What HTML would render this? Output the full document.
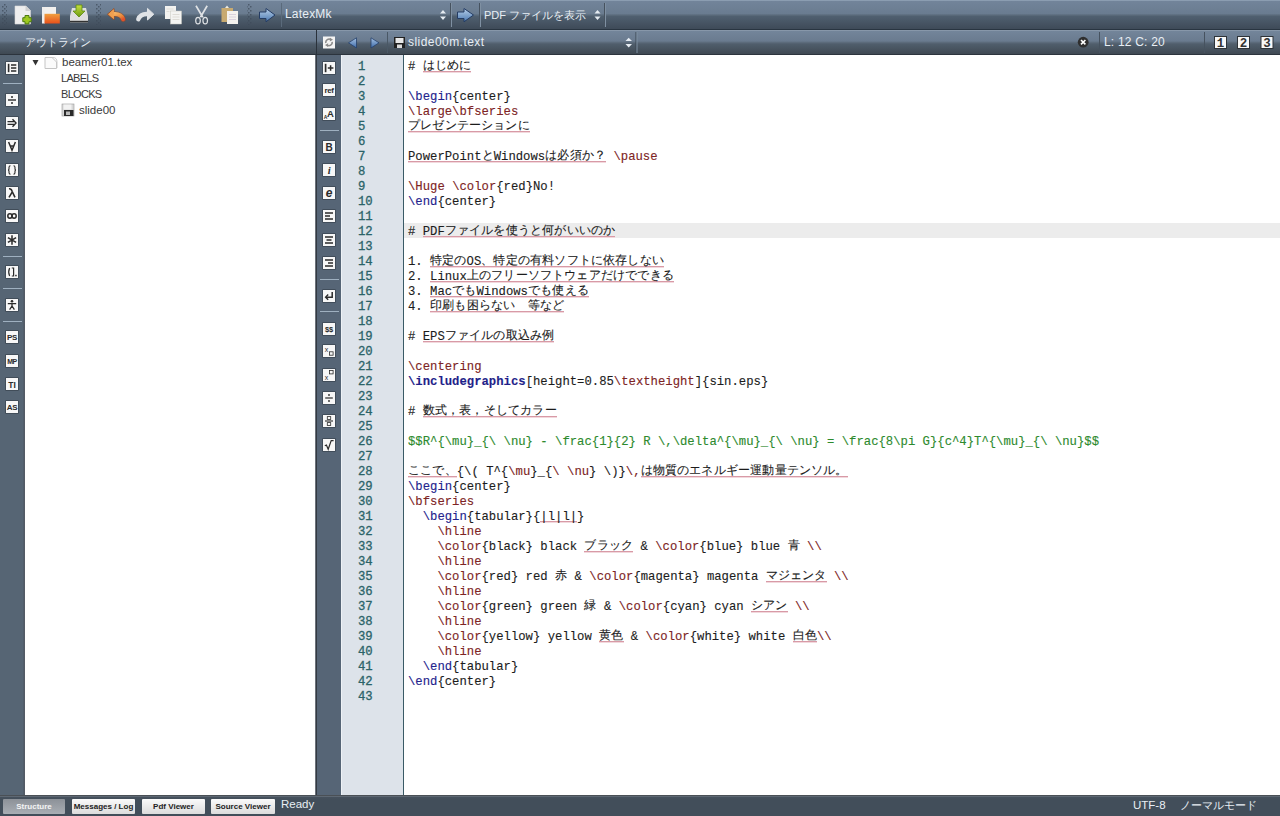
<!DOCTYPE html>
<html><head><meta charset="utf-8"><title>Texmaker</title>
<style>
*{box-sizing:border-box}
html,body{margin:0;padding:0}
body{width:1280px;height:816px;overflow:hidden;position:relative;background:#3e4a57;font-family:"Liberation Sans",sans-serif}
.a{position:absolute}
#tb{left:0;top:0;width:1280px;height:30px;background:linear-gradient(#8b9db1 0,#8b9db1 1px,#72849a 1px,#6a7c90 13.5px,#5c6c7d 15px,#4f5f6f 16.5px,#3f4b59 28.5px,#293541 29.5px)}
#hl{left:0;top:30px;width:316px;height:25px;background:linear-gradient(#8797a9 0,#8797a9 1px,#73859a 1px,#6a7b8f 11px,#5c6b7b 12.5px,#505e6c 14px,#3f4953 24px,#2c343d 24px)}
#hr{left:316px;top:30px;width:964px;height:25px;background:linear-gradient(#8797a9 0,#8797a9 1px,#73859a 1px,#6a7b8f 11px,#5c6b7b 12.5px,#505e6c 14px,#3f4953 24px,#2c343d 24px)}
#lbar{left:0;top:55px;width:25px;height:740px;background:linear-gradient(90deg,#566574 0,#566574 23px,#4d5662 24px,#5a5f68 25px)}
#tree{left:25px;top:55px;width:290px;height:740px;background:#fff}
#split{left:315px;top:55px;width:2px;height:740px;background:linear-gradient(90deg,#6b717a 0,#6b717a 0.5px,#333a42 1px)}
#ebar{left:317px;top:55px;width:24px;height:740px;background:#566576}
#gut{left:341px;top:55px;width:62px;height:740px;background:linear-gradient(90deg,#eef2f6 0,#eef2f6 1px,#dde3ea 1px)}
#gline{left:403px;top:55px;width:1px;height:740px;background:#3a5a66}
#ed{left:404px;top:55px;width:876px;height:740px;background:#fff}
#cur{left:404px;top:223px;width:876px;height:15px;background:#ececec}
#sb{left:0;top:795px;width:1280px;height:21px;background:linear-gradient(#4a5056 0,#4a5056 1px,#5e6873 1px,#5e6873 2px,#46515d 2px,#424e5a 5px,#424e5a 21px)}
.cl{position:absolute;left:408px;height:15px;line-height:15px;white-space:pre;font-family:"Liberation Mono",monospace;font-size:12.25px;color:#1c1c1c;-webkit-text-stroke:0.12px currentColor}
.nl{position:absolute;left:358px;height:15px;line-height:15px;white-space:pre;font-family:"Liberation Mono",monospace;font-size:12.25px;color:#2b6368;-webkit-text-stroke:0.3px currentColor}
.k{color:#23238c}
.kb{color:#1f1f8a;font-weight:bold}
.m{color:#7d2424}
.g{color:#2d8a2d}
.u{background:linear-gradient(#d89aa6,#d89aa6) 0 11px/100% 1px no-repeat,linear-gradient(#f2d8dd,#f2d8dd) 0 12px/100% 1px no-repeat}
.j{position:relative;top:-1px;letter-spacing:0.18px}
.ico{position:absolute;width:12px;height:12px;background:#f4f4f4;color:#222;font-size:10px;line-height:12px;text-align:center;font-weight:bold;overflow:hidden}
.sep{position:absolute;height:2px;background:#a9b8c6}
.btn{position:absolute;top:799px;height:15px;border-radius:1px;font-size:8px;font-weight:bold;line-height:15px;text-align:center;background:linear-gradient(#fafafa,#dcdcdc);color:#222}
.tt{position:absolute;font-size:11px;color:#3a3a3a;white-space:pre}
.wt{position:absolute;color:#e8eef4;white-space:pre;font-size:12px}

</style></head>
<body>
<div id="tb" class="a"></div>
<div id="hl" class="a"></div>
<div id="hr" class="a"></div>
<div id="lbar" class="a"></div>
<div id="tree" class="a"></div>
<div id="split" class="a"></div>
<div id="ebar" class="a"></div>
<div id="gut" class="a"></div>
<div id="gline" class="a"></div>
<div id="ed" class="a"></div>
<div id="cur" class="a"></div>
<div id="sb" class="a"></div>

<!-- toolbar icons -->
<svg class="a" style="left:0;top:0" width="620" height="30" viewBox="0 0 620 30">
  <defs>
    <linearGradient id="orng" x1="0" y1="0" x2="0" y2="1"><stop offset="0" stop-color="#f0a040"/><stop offset="1" stop-color="#e8501a"/></linearGradient>
    <linearGradient id="grn" x1="0" y1="0" x2="0" y2="1"><stop offset="0" stop-color="#c8e040"/><stop offset="1" stop-color="#6a9a10"/></linearGradient>
    <linearGradient id="blu" x1="0" y1="0" x2="0" y2="1"><stop offset="0" stop-color="#b8d0ea"/><stop offset="1" stop-color="#4a78b0"/></linearGradient>
    <pattern id="dots" width="4" height="4" patternUnits="userSpaceOnUse"><rect x="0" y="0" width="1.5" height="1.5" fill="#3e4a58" opacity="0.7"/><rect x="2" y="2" width="1.5" height="1.5" fill="#3e4a58" opacity="0.7"/></pattern>
  </defs>
  <!-- grips -->
  <rect x="2" y="4" width="5" height="21" fill="url(#dots)"/>
  <rect x="96" y="4" width="5" height="21" fill="url(#dots)"/>
  <rect x="247" y="4" width="5" height="21" fill="url(#dots)"/>
  <!-- new -->
  <path d="M15 6 H26 L30.5 10.5 V24 H15 Z" fill="#eeeeee" stroke="#d8d8d8" stroke-width="0.6"/>
  <path d="M25.5 6 V11 H30.5" fill="#cfcfcf"/>
  <path d="M25 15.5 h4 v2.2 h2.2 v4 h-2.2 v2.2 h-4 v-2.2 h-2.2 v-4 h2.2 z" fill="#9cc820" stroke="#4d7a10" stroke-width="1"/>
  <!-- open -->
  <path d="M42 7 H56 V15 H42 Z" fill="#f2f0ee"/>
  <path d="M42 7 H45 V23.5 H42 Z" fill="#f0eeec"/>
  <path d="M44.5 13.8 H59.8 V23.5 H44.5 Z" fill="url(#orng)"/>
  <!-- save -->
  <path d="M72 8 H86 L88 16 V22.5 H70 V16 Z" fill="#dedede"/>
  <rect x="70" y="20.8" width="18" height="1.6" fill="#333"/>
  <path d="M76 5 H82 V11 H85 L79 17 L73 11 H76 Z" fill="url(#grn)" stroke="#5a8a10" stroke-width="0.8"/>
  <!-- undo -->
  <linearGradient id="ung" x1="0" y1="0" x2="1" y2="1"><stop offset="0" stop-color="#f6b666"/><stop offset="0.6" stop-color="#ea8a3a"/><stop offset="1" stop-color="#e0502a"/></linearGradient>
  <path d="M112.5 14.2 Q121 13.2 123.2 19.3" fill="none" stroke="#9a4a20" stroke-width="5.4" stroke-linecap="round" opacity="0.55"/>
  <path d="M107.5 14.2 L114 8.6 L114 19.8 Z" fill="#ea8a3a" stroke="#9a4a20" stroke-width="1" stroke-linejoin="round" opacity="0.9"/>
  <path d="M112.5 14.2 Q121 13.2 123.2 19.3" fill="none" stroke="url(#ung)" stroke-width="4" stroke-linecap="round"/>
  <path d="M108.6 14.2 L113.6 9.8 L113.6 18.6 Z" fill="#f0a050" stroke="#f0a050" stroke-width="0.8" stroke-linejoin="round"/>
  <!-- redo -->
  <path d="M149 14.2 Q140.5 13.2 138.3 19.3" fill="none" stroke="#dfe2e6" stroke-width="4.4" stroke-linecap="round"/>
  <path d="M153.8 14.2 L147.5 8.4 L147.5 20 Z" fill="#dfe2e6" stroke="#dfe2e6" stroke-width="1" stroke-linejoin="round"/>
  <!-- copy -->
  <rect x="165" y="6" width="11" height="13" fill="#f2f2f0"/>
  <rect x="170.5" y="11" width="11" height="13" fill="#f4f4f2" stroke="#c8c8c0" stroke-width="0.5"/>
  <path d="M172.5 14.5h7M172.5 17h7M172.5 19.5h7" stroke="#c9c5bb" stroke-width="0.5"/><path d="M166.5 9h7M166.5 11.5h3" stroke="#cfcbc2" stroke-width="0.5"/>
  <!-- cut -->
  <path d="M196 5.8 L202.8 17.2 M207.2 5.8 L200.4 17.2" stroke="#dfe2e5" stroke-width="1.7"/>
  <ellipse cx="198" cy="20.6" rx="2.3" ry="3.3" fill="none" stroke="#dfe2e5" stroke-width="1.2"/>
  <ellipse cx="205.2" cy="20.6" rx="2.3" ry="3.3" fill="none" stroke="#dfe2e5" stroke-width="1.2"/>
  <!-- paste -->
  <rect x="221.5" y="8" width="11.5" height="14" fill="#c8aa70"/>
  <path d="M225 8 L227 5.5 L229 8 Z" fill="#f0ece0"/>
  <rect x="227" y="11" width="11" height="13" fill="#f4f2ee"/>
  <path d="M229 14.5h7M229 17h7M229 19.5h7" stroke="#c0b0cc" stroke-width="0.5"/>
  <!-- blue arrows -->
  <path d="M259.5 12 H266 V8.5 L275 15 L266 21.8 V18.5 H259.5 Z" fill="url(#blu)" stroke="#243c64" stroke-width="1"/>
  <path d="M457.5 12 H464 V8.5 L473.5 15 L464 21.8 V18.5 H457.5 Z" fill="url(#blu)" stroke="#243c64" stroke-width="1"/>
  <!-- separators -->
  <rect x="281" y="3" width="1" height="24" fill="#5a6a7b"/>
  <rect x="450" y="3" width="1" height="24" fill="#46525f"/>
  <rect x="451" y="3" width="1" height="24" fill="#7f90a2"/>
  <rect x="479" y="3" width="1" height="24" fill="#46525f"/>
  <rect x="480" y="3" width="1" height="24" fill="#7f90a2"/>
  <rect x="604" y="3" width="1" height="24" fill="#46525f"/>
  <rect x="605" y="3" width="1" height="24" fill="#7f90a2"/>
  <!-- combobox arrows -->
  <path d="M440 13.5 L443 10 L446 13.5 Z M440 16.5 L443 20 L446 16.5 Z" fill="#e6ecf2"/>
  <path d="M594.5 13.5 L597.5 10 L600.5 13.5 Z M594.5 16.5 L597.5 20 L600.5 16.5 Z" fill="#e6ecf2"/>
</svg>

<!-- header right icons -->
<svg class="a" style="left:0;top:30px" width="1280" height="25" viewBox="0 30 1280 25">
  <defs>
    <linearGradient id="blu2" x1="0" y1="0" x2="0" y2="1"><stop offset="0" stop-color="#a8c4e4"/><stop offset="1" stop-color="#3d6aa8"/></linearGradient>
  </defs>
  <rect x="316" y="30" width="1" height="25" fill="#2a323b"/>
  <rect x="323" y="36.5" width="12" height="12" fill="#f4f4f4"/>
  <path d="M325.8 43 A3.4 3.4 0 0 1 331 39.6 M332.2 41.8 A3.4 3.4 0 0 1 327 45.2" fill="none" stroke="#8a8a8a" stroke-width="1.6"/><path d="M330 37.8 L333 39.8 L329.8 41.6 Z M328 47 L325 45 L328.2 43.2 Z" fill="#8a8a8a"/>
  <path d="M348.5 42.8 L356.5 37.8 V48 Z" fill="url(#blu2)" stroke="#26406a" stroke-width="0.8"/>
  <path d="M379 42.8 L371 37.8 V48 Z" fill="url(#blu2)" stroke="#26406a" stroke-width="0.8"/>
  <rect x="387" y="32" width="1" height="21" fill="#4a5866"/>
  <rect x="394" y="37" width="11" height="11" fill="#222"/>
  <rect x="395.5" y="38" width="8" height="5" fill="#e8e8e8"/>
  <rect x="397" y="44.5" width="5" height="3.5" fill="#ddd"/>
  <path d="M625.5 41 L628.7 37.8 L632 41 Z M625.5 44 L628.7 47.5 L632 44 Z" fill="#e6ecf2"/>
  <rect x="635.5" y="32" width="1" height="21" fill="#3a4652"/>
  <rect x="636.5" y="32" width="1" height="21" fill="#7f90a2"/>
  <circle cx="1083.2" cy="42.2" r="5.4" fill="#2f2f2f"/>
  <path d="M1081 40 L1085.4 44.4 M1085.4 40 L1081 44.4" stroke="#fff" stroke-width="1.6"/>
  <rect x="1099" y="32" width="1" height="21" fill="#46525f"/>
  <rect x="1204" y="32" width="1" height="21" fill="#46525f"/>
  <rect x="1214" y="36" width="13" height="13" fill="#2e3338"/>
  <rect x="1215" y="37" width="11" height="11" fill="#f8f8f8"/>
  <rect x="1237" y="36" width="13" height="13" fill="#2e3338"/>
  <rect x="1238" y="37" width="11" height="11" fill="#f8f8f8"/>
  <rect x="1260.5" y="36" width="13" height="13" fill="#2e3338"/>
  <rect x="1261.5" y="37" width="11" height="11" fill="#f8f8f8"/>
  <text x="1220.5" y="47" font-family="Liberation Mono" font-weight="bold" font-size="12.5" text-anchor="middle" fill="#333">1</text>
  <text x="1243.5" y="47" font-family="Liberation Mono" font-weight="bold" font-size="12.5" text-anchor="middle" fill="#333">2</text>
  <text x="1267" y="47" font-family="Liberation Mono" font-weight="bold" font-size="12.5" text-anchor="middle" fill="#333">3</text>
</svg>

<!-- header texts -->
<div class="wt" style="left:25px;top:34.5px;font-size:11px">アウトライン</div>
<div class="wt" style="left:285px;top:7px;letter-spacing:0.2px">LatexMk</div>
<div class="wt" style="left:484px;top:8px;font-size:11px">PDF ファイルを表示</div>
<div class="wt" style="left:408px;top:35px;letter-spacing:0.45px">slide00m.text</div>
<div class="wt" style="left:1104px;top:35px;letter-spacing:0.2px">L: 12 C: 20</div>

<!-- icons -->
<svg class="a" style="left:5px;top:61px" width="14" height="14" viewBox="-1 -1 14 14"><rect x="-0.6" y="-0.6" width="13.2" height="13.2" fill="#2a323a" opacity="0.75"/><rect x="0" y="0" width="12" height="12" fill="#f7f7f7"/><path d="M1.8 1.8h1.6v8.4h-1.6z" fill="#2b2b2b"/><path d="M5 3H10.3M5 6H10.3M5 9H10.3" fill="none" stroke="#2b2b2b" stroke-width="1.3"/></svg>
<svg class="a" style="left:5px;top:93px" width="14" height="14" viewBox="-1 -1 14 14"><rect x="-0.6" y="-0.6" width="13.2" height="13.2" fill="#2a323a" opacity="0.75"/><rect x="0" y="0" width="12" height="12" fill="#f7f7f7"/><circle cx="6" cy="3" r="1" fill="#2b2b2b"/><circle cx="6" cy="9" r="1" fill="#2b2b2b"/><path d="M2 6H10" fill="none" stroke="#2b2b2b" stroke-width="1.4"/></svg>
<svg class="a" style="left:5px;top:116px" width="14" height="14" viewBox="-1 -1 14 14"><rect x="-0.6" y="-0.6" width="13.2" height="13.2" fill="#2a323a" opacity="0.75"/><rect x="0" y="0" width="12" height="12" fill="#f7f7f7"/><path d="M1.5 4.6H8M1.5 7.4H8" fill="none" stroke="#2b2b2b" stroke-width="1.2"/><path d="M6.5 2.3L10 6L6.5 9.7" fill="none" stroke="#2b2b2b" stroke-width="1.4"/></svg>
<svg class="a" style="left:5px;top:139px" width="14" height="14" viewBox="-1 -1 14 14"><rect x="-0.6" y="-0.6" width="13.2" height="13.2" fill="#2a323a" opacity="0.75"/><rect x="0" y="0" width="12" height="12" fill="#f7f7f7"/><path d="M2.6 2L6 10.2L9.4 2M4.2 6H7.8" fill="none" stroke="#2b2b2b" stroke-width="1.5"/></svg>
<svg class="a" style="left:5px;top:163px" width="14" height="14" viewBox="-1 -1 14 14"><rect x="-0.6" y="-0.6" width="13.2" height="13.2" fill="#2a323a" opacity="0.75"/><rect x="0" y="0" width="12" height="12" fill="#f7f7f7"/><path d="M4.5 1.8Q3 1.8 3 3.5V5Q3 6 2 6Q3 6 3 7V8.5Q3 10.2 4.5 10.2M7.5 1.8Q9 1.8 9 3.5V5Q9 6 10 6Q9 6 9 7V8.5Q9 10.2 7.5 10.2" fill="none" stroke="#2b2b2b" stroke-width="1.1"/></svg>
<svg class="a" style="left:5px;top:186px" width="14" height="14" viewBox="-1 -1 14 14"><rect x="-0.6" y="-0.6" width="13.2" height="13.2" fill="#2a323a" opacity="0.75"/><rect x="0" y="0" width="12" height="12" fill="#f7f7f7"/><path d="M3 1.8Q5.2 1.5 6.2 4.5L9 10.3M6.3 4.8L3 10.3" fill="none" stroke="#2b2b2b" stroke-width="1.6"/></svg>
<svg class="a" style="left:5px;top:209px" width="14" height="14" viewBox="-1 -1 14 14"><rect x="-0.6" y="-0.6" width="13.2" height="13.2" fill="#2a323a" opacity="0.75"/><rect x="0" y="0" width="12" height="12" fill="#f7f7f7"/><ellipse cx="3.9" cy="6" rx="2.1" ry="2.2" fill="none" stroke="#2b2b2b" stroke-width="1.5"/><ellipse cx="8.1" cy="6" rx="2.1" ry="2.2" fill="none" stroke="#2b2b2b" stroke-width="1.5"/></svg>
<svg class="a" style="left:5px;top:233px" width="14" height="14" viewBox="-1 -1 14 14"><rect x="-0.6" y="-0.6" width="13.2" height="13.2" fill="#2a323a" opacity="0.75"/><rect x="0" y="0" width="12" height="12" fill="#f7f7f7"/><path d="M6 1.3V10.7M1.9 3.6L10.1 8.4M10.1 3.6L1.9 8.4" fill="none" stroke="#2b2b2b" stroke-width="1.5"/></svg>
<svg class="a" style="left:5px;top:265px" width="14" height="14" viewBox="-1 -1 14 14"><rect x="-0.6" y="-0.6" width="13.2" height="13.2" fill="#2a323a" opacity="0.75"/><rect x="0" y="0" width="12" height="12" fill="#f7f7f7"/><path d="M3.6 2Q1.8 6 3.6 10M5.8 2H7.6V10H5.8" fill="none" stroke="#2b2b2b" stroke-width="1.2"/><rect x="9.2" y="8.8" width="1.5" height="1.5" fill="#2b2b2b"/></svg>
<svg class="a" style="left:5px;top:298px" width="14" height="14" viewBox="-1 -1 14 14"><rect x="-0.6" y="-0.6" width="13.2" height="13.2" fill="#2a323a" opacity="0.75"/><rect x="0" y="0" width="12" height="12" fill="#f7f7f7"/><circle cx="6" cy="2.3" r="1.3" fill="#2b2b2b"/><path d="M1.8 4.6H10.2M6 4.3V7.2M6 7L3.6 10.6M6 7L8.4 10.6" fill="none" stroke="#2b2b2b" stroke-width="1.3"/></svg>
<svg class="a" style="left:5px;top:330px" width="14" height="14" viewBox="-1 -1 14 14"><rect x="-0.6" y="-0.6" width="13.2" height="13.2" fill="#2a323a" opacity="0.75"/><rect x="0" y="0" width="12" height="12" fill="#f7f7f7"/><text x="6" y="9.3" font-family="Liberation Sans" font-size="8" font-weight="bold" font-style="normal" text-anchor="middle" letter-spacing="-0.3" fill="#2b2b2b">PS</text></svg>
<svg class="a" style="left:5px;top:354px" width="14" height="14" viewBox="-1 -1 14 14"><rect x="-0.6" y="-0.6" width="13.2" height="13.2" fill="#2a323a" opacity="0.75"/><rect x="0" y="0" width="12" height="12" fill="#f7f7f7"/><text x="6" y="9" font-family="Liberation Sans" font-size="7" font-weight="bold" font-style="normal" text-anchor="middle" letter-spacing="-0.5" fill="#2b2b2b">MP</text></svg>
<svg class="a" style="left:5px;top:377px" width="14" height="14" viewBox="-1 -1 14 14"><rect x="-0.6" y="-0.6" width="13.2" height="13.2" fill="#2a323a" opacity="0.75"/><rect x="0" y="0" width="12" height="12" fill="#f7f7f7"/><text x="6" y="9.5" font-family="Liberation Sans" font-size="8.5" font-weight="bold" font-style="normal" text-anchor="middle" letter-spacing="0" fill="#2b2b2b">TI</text></svg>
<svg class="a" style="left:5px;top:400px" width="14" height="14" viewBox="-1 -1 14 14"><rect x="-0.6" y="-0.6" width="13.2" height="13.2" fill="#2a323a" opacity="0.75"/><rect x="0" y="0" width="12" height="12" fill="#f7f7f7"/><text x="6" y="9.3" font-family="Liberation Sans" font-size="8" font-weight="bold" font-style="normal" text-anchor="middle" letter-spacing="-0.4" fill="#2b2b2b">AS</text></svg>
<div class="a" style="left:3px;top:83px;width:19px;height:1px;background:#9fb0c0"></div>
<div class="a" style="left:3px;top:256px;width:19px;height:1px;background:#9fb0c0"></div>
<div class="a" style="left:3px;top:288px;width:19px;height:1px;background:#9fb0c0"></div>
<div class="a" style="left:3px;top:321px;width:19px;height:1px;background:#9fb0c0"></div>
<svg class="a" style="left:322px;top:61px" width="14" height="14" viewBox="-1 -1 14 14"><rect x="-0.6" y="-0.6" width="13.2" height="13.2" fill="#2a323a" opacity="0.75"/><rect x="0" y="0" width="12" height="12" fill="#f7f7f7"/><path d="M2.6 1.8V10.2" fill="none" stroke="#2b2b2b" stroke-width="1.7"/><path d="M4.8 6H10.4M7.6 3.2V8.8" fill="none" stroke="#2b2b2b" stroke-width="1.5"/></svg>
<svg class="a" style="left:322px;top:83px" width="14" height="14" viewBox="-1 -1 14 14"><rect x="-0.6" y="-0.6" width="13.2" height="13.2" fill="#2a323a" opacity="0.75"/><rect x="0" y="0" width="12" height="12" fill="#f7f7f7"/><text x="6" y="9" font-family="Liberation Sans" font-size="8" font-weight="bold" font-style="normal" text-anchor="middle" letter-spacing="-0.4" fill="#2b2b2b">ref</text></svg>
<svg class="a" style="left:322px;top:107px" width="14" height="14" viewBox="-1 -1 14 14"><rect x="-0.6" y="-0.6" width="13.2" height="13.2" fill="#2a323a" opacity="0.75"/><rect x="0" y="0" width="12" height="12" fill="#f7f7f7"/><text x="2.6" y="11" font-family="Liberation Sans" font-size="5" font-weight="bold" font-style="normal" text-anchor="middle" letter-spacing="0" fill="#2b2b2b">A</text><text x="7.4" y="9" font-family="Liberation Sans" font-size="9.5" font-weight="bold" font-style="normal" text-anchor="middle" letter-spacing="0" fill="#2b2b2b">A</text></svg>
<svg class="a" style="left:322px;top:140px" width="14" height="14" viewBox="-1 -1 14 14"><rect x="-0.6" y="-0.6" width="13.2" height="13.2" fill="#2a323a" opacity="0.75"/><rect x="0" y="0" width="12" height="12" fill="#f7f7f7"/><text x="6" y="10" font-family="Liberation Sans" font-size="10" font-weight="bold" font-style="normal" text-anchor="middle" letter-spacing="0" fill="#2b2b2b">B</text></svg>
<svg class="a" style="left:322px;top:163px" width="14" height="14" viewBox="-1 -1 14 14"><rect x="-0.6" y="-0.6" width="13.2" height="13.2" fill="#2a323a" opacity="0.75"/><rect x="0" y="0" width="12" height="12" fill="#f7f7f7"/><text x="6.3" y="10" font-family="Liberation Serif" font-size="10.5" font-weight="bold" font-style="italic" text-anchor="middle" letter-spacing="0" fill="#2b2b2b">i</text></svg>
<svg class="a" style="left:322px;top:186px" width="14" height="14" viewBox="-1 -1 14 14"><rect x="-0.6" y="-0.6" width="13.2" height="13.2" fill="#2a323a" opacity="0.75"/><rect x="0" y="0" width="12" height="12" fill="#f7f7f7"/><text x="6" y="10" font-family="Liberation Sans" font-size="12" font-weight="bold" font-style="italic" text-anchor="middle" letter-spacing="0" fill="#2b2b2b">e</text></svg>
<svg class="a" style="left:322px;top:209px" width="14" height="14" viewBox="-1 -1 14 14"><rect x="-0.6" y="-0.6" width="13.2" height="13.2" fill="#2a323a" opacity="0.75"/><rect x="0" y="0" width="12" height="12" fill="#f7f7f7"/><path d="M2 3H10M2 6H7M2 9H10" fill="none" stroke="#2b2b2b" stroke-width="1.3"/></svg>
<svg class="a" style="left:322px;top:233px" width="14" height="14" viewBox="-1 -1 14 14"><rect x="-0.6" y="-0.6" width="13.2" height="13.2" fill="#2a323a" opacity="0.75"/><rect x="0" y="0" width="12" height="12" fill="#f7f7f7"/><path d="M2 3H10M3.5 6H8.5M2 9H10" fill="none" stroke="#2b2b2b" stroke-width="1.3"/></svg>
<svg class="a" style="left:322px;top:256px" width="14" height="14" viewBox="-1 -1 14 14"><rect x="-0.6" y="-0.6" width="13.2" height="13.2" fill="#2a323a" opacity="0.75"/><rect x="0" y="0" width="12" height="12" fill="#f7f7f7"/><path d="M2 3H10M5 6H10M2 9H10" fill="none" stroke="#2b2b2b" stroke-width="1.3"/></svg>
<svg class="a" style="left:322px;top:289px" width="14" height="14" viewBox="-1 -1 14 14"><rect x="-0.6" y="-0.6" width="13.2" height="13.2" fill="#2a323a" opacity="0.75"/><rect x="0" y="0" width="12" height="12" fill="#f7f7f7"/><path d="M9.2 2V7.2H3" fill="none" stroke="#2b2b2b" stroke-width="1.5"/><path d="M5.2 4.6L2.6 7.2L5.2 9.8" fill="none" stroke="#2b2b2b" stroke-width="1.4"/></svg>
<svg class="a" style="left:322px;top:322px" width="14" height="14" viewBox="-1 -1 14 14"><rect x="-0.6" y="-0.6" width="13.2" height="13.2" fill="#2a323a" opacity="0.75"/><rect x="0" y="0" width="12" height="12" fill="#f7f7f7"/><text x="6" y="9.2" font-family="Liberation Sans" font-size="7.5" font-weight="bold" font-style="normal" text-anchor="middle" letter-spacing="-0.1" fill="#2b2b2b">$$</text></svg>
<svg class="a" style="left:322px;top:344px" width="14" height="14" viewBox="-1 -1 14 14"><rect x="-0.6" y="-0.6" width="13.2" height="13.2" fill="#2a323a" opacity="0.75"/><rect x="0" y="0" width="12" height="12" fill="#f7f7f7"/><text x="3.5" y="6.5" font-family="Liberation Sans" font-size="7" font-weight="normal" font-style="normal" text-anchor="middle" letter-spacing="0" fill="#2b2b2b">x</text><rect x="6.5" y="6.8" width="3.6" height="3.4" fill="none" stroke="#2b2b2b" stroke-width="0.8"/></svg>
<svg class="a" style="left:322px;top:368px" width="14" height="14" viewBox="-1 -1 14 14"><rect x="-0.6" y="-0.6" width="13.2" height="13.2" fill="#2a323a" opacity="0.75"/><rect x="0" y="0" width="12" height="12" fill="#f7f7f7"/><rect x="6.5" y="1.5" width="3.6" height="3.4" fill="none" stroke="#2b2b2b" stroke-width="0.8"/><text x="3.5" y="10.5" font-family="Liberation Sans" font-size="7" font-weight="normal" font-style="normal" text-anchor="middle" letter-spacing="0" fill="#2b2b2b">x</text></svg>
<svg class="a" style="left:322px;top:391px" width="14" height="14" viewBox="-1 -1 14 14"><rect x="-0.6" y="-0.6" width="13.2" height="13.2" fill="#2a323a" opacity="0.75"/><rect x="0" y="0" width="12" height="12" fill="#f7f7f7"/><circle cx="6" cy="3" r="0.9" fill="#2b2b2b"/><circle cx="6" cy="9" r="0.9" fill="#2b2b2b"/><path d="M2.2 6H9.8" fill="none" stroke="#2b2b2b" stroke-width="1.2"/></svg>
<svg class="a" style="left:322px;top:414px" width="14" height="14" viewBox="-1 -1 14 14"><rect x="-0.6" y="-0.6" width="13.2" height="13.2" fill="#2a323a" opacity="0.75"/><rect x="0" y="0" width="12" height="12" fill="#f7f7f7"/><rect x="4.3" y="1.6" width="3.4" height="2.8" fill="none" stroke="#2b2b2b" stroke-width="0.8"/><rect x="4.3" y="7.6" width="3.4" height="2.8" fill="none" stroke="#2b2b2b" stroke-width="0.8"/><path d="M2 6H10" fill="none" stroke="#2b2b2b" stroke-width="1.1"/></svg>
<svg class="a" style="left:322px;top:438px" width="14" height="14" viewBox="-1 -1 14 14"><rect x="-0.6" y="-0.6" width="13.2" height="13.2" fill="#2a323a" opacity="0.75"/><rect x="0" y="0" width="12" height="12" fill="#f7f7f7"/><path d="M1.8 6.8L3.4 6L5.2 10.3L8.2 1.6H10.6" fill="none" stroke="#2b2b2b" stroke-width="1.2"/></svg>
<div class="a" style="left:320px;top:130px;width:19px;height:1px;background:#9fb0c0"></div>
<div class="a" style="left:320px;top:279px;width:19px;height:1px;background:#9fb0c0"></div>
<div class="a" style="left:320px;top:311px;width:19px;height:1px;background:#9fb0c0"></div>

<!-- tree -->
<svg class="a" style="left:25px;top:55px" width="60" height="65" viewBox="25 55 60 65">
  <path d="M32.5 60 L38.5 60 L35.5 65.5 Z" fill="#333"/>
  <path d="M45 57.5 H52 L56.5 62 V68.5 H45 Z" fill="#fafafa" stroke="#c4c4c4" stroke-width="1"/><path d="M47.5 57.5 H53 Q57 57.5 57 62 V68" fill="none" stroke="#c8c8c8" stroke-width="0.9"/>
  <rect x="62" y="104" width="12" height="12" fill="#d8d8d8" stroke="#999" stroke-width="0.6"/>
  <rect x="64" y="110" width="9.5" height="6" fill="#2a2a2a"/>
  <rect x="66" y="111.5" width="4" height="3.5" fill="#bbb"/>
  <rect x="63.5" y="104.5" width="8" height="5" fill="#f2f2f2"/>
</svg>
<div class="tt" style="left:62px;top:56px;font-size:11.5px">beamer01.tex</div>
<div class="tt" style="left:61px;top:72px;letter-spacing:-0.7px">LABELS</div>
<div class="tt" style="left:61px;top:88px;letter-spacing:-0.7px">BLOCKS</div>
<div class="tt" style="left:79px;top:104px;font-size:11.5px">slide00</div>

<div class="nl" style="top:60px">1</div>
<div class="nl" style="top:75px">2</div>
<div class="nl" style="top:90px">3</div>
<div class="nl" style="top:105px">4</div>
<div class="nl" style="top:120px">5</div>
<div class="nl" style="top:135px">6</div>
<div class="nl" style="top:150px">7</div>
<div class="nl" style="top:165px">8</div>
<div class="nl" style="top:180px">9</div>
<div class="nl" style="top:195px">10</div>
<div class="nl" style="top:210px">11</div>
<div class="nl" style="top:225px">12</div>
<div class="nl" style="top:240px">13</div>
<div class="nl" style="top:255px">14</div>
<div class="nl" style="top:270px">15</div>
<div class="nl" style="top:285px">16</div>
<div class="nl" style="top:300px">17</div>
<div class="nl" style="top:315px">18</div>
<div class="nl" style="top:330px">19</div>
<div class="nl" style="top:345px">20</div>
<div class="nl" style="top:360px">21</div>
<div class="nl" style="top:375px">22</div>
<div class="nl" style="top:390px">23</div>
<div class="nl" style="top:405px">24</div>
<div class="nl" style="top:420px">25</div>
<div class="nl" style="top:435px">26</div>
<div class="nl" style="top:450px">27</div>
<div class="nl" style="top:465px">28</div>
<div class="nl" style="top:480px">29</div>
<div class="nl" style="top:495px">30</div>
<div class="nl" style="top:510px">31</div>
<div class="nl" style="top:525px">32</div>
<div class="nl" style="top:540px">33</div>
<div class="nl" style="top:555px">34</div>
<div class="nl" style="top:570px">35</div>
<div class="nl" style="top:585px">36</div>
<div class="nl" style="top:600px">37</div>
<div class="nl" style="top:615px">38</div>
<div class="nl" style="top:630px">39</div>
<div class="nl" style="top:645px">40</div>
<div class="nl" style="top:660px">41</div>
<div class="nl" style="top:675px">42</div>
<div class="nl" style="top:690px">43</div>
<div class="cl" style="top:60px"># <span class="u"><span class="j">はじめに</span></span></div>
<div class="cl" style="top:75px"></div>
<div class="cl" style="top:90px"><span class="k">\begin</span>{center}</div>
<div class="cl" style="top:105px"><span class="m">\large</span><span class="m">\bfseries</span></div>
<div class="cl" style="top:120px"><span class="u"><span class="j">プレゼンテーションに</span></span></div>
<div class="cl" style="top:135px"></div>
<div class="cl" style="top:150px"><span class="u">PowerPoint<span class="j">と</span>Windows<span class="j">は必須か？</span></span> <span class="m">\pause</span></div>
<div class="cl" style="top:165px"></div>
<div class="cl" style="top:180px"><span class="m">\Huge</span> <span class="m">\color</span>{red}No!</div>
<div class="cl" style="top:195px"><span class="k">\end</span>{center}</div>
<div class="cl" style="top:210px"></div>
<div class="cl" style="top:225px"># <span class="u">PDF<span class="j">ファイルを使うと何がいいのか</span></span></div>
<div class="cl" style="top:240px"></div>
<div class="cl" style="top:255px">1. <span class="u"><span class="j">特定の</span>OS<span class="j">、特定の有料ソフトに依存しない</span></span></div>
<div class="cl" style="top:270px">2. <span class="u">Linux<span class="j">上のフリーソフトウェアだけでできる</span></span></div>
<div class="cl" style="top:285px">3. <span class="u">Mac<span class="j">でも</span>Windows<span class="j">でも使える</span></span></div>
<div class="cl" style="top:300px">4. <span class="u"><span class="j">印刷も困らない　等など</span></span></div>
<div class="cl" style="top:315px"></div>
<div class="cl" style="top:330px"># <span class="u">EPS<span class="j">ファイルの取込み例</span></span></div>
<div class="cl" style="top:345px"></div>
<div class="cl" style="top:360px"><span class="m">\centering</span></div>
<div class="cl" style="top:375px"><span class="kb">\includegraphics</span>[height=0.85<span class="m">\textheight</span>]{sin.eps}</div>
<div class="cl" style="top:390px"></div>
<div class="cl" style="top:405px"># <span class="u"><span class="j">数式，表，そしてカラー</span></span></div>
<div class="cl" style="top:420px"></div>
<div class="cl" style="top:435px"><span class="g">$$R^{\mu}_{\ \nu} - \frac{1}{2} R \,\delta^{\mu}_{\ \nu} = \frac{8\pi G}{c^4}T^{\mu}_{\ \nu}$$</span></div>
<div class="cl" style="top:450px"></div>
<div class="cl" style="top:465px"><span class="u"><span class="j">ここで、</span></span>{\( T^{<span class="m">\mu</span>}_{<span class="m">\ \nu</span>} \)}<span class="m">\,</span><span class="u"><span class="j">は物質のエネルギー運動量テンソル。</span></span></div>
<div class="cl" style="top:480px"><span class="k">\begin</span>{center}</div>
<div class="cl" style="top:495px"><span class="m">\bfseries</span></div>
<div class="cl" style="top:510px">  <span class="k">\begin</span>{tabular}{<span class="u">|l|l|</span>}</div>
<div class="cl" style="top:525px">    <span class="m">\hline</span></div>
<div class="cl" style="top:540px">    <span class="m">\color</span>{black} black <span class="u"><span class="j">ブラック</span></span> &amp; <span class="m">\color</span>{blue} blue <span class="j">青</span> <span class="m">\\</span></div>
<div class="cl" style="top:555px">    <span class="m">\hline</span></div>
<div class="cl" style="top:570px">    <span class="m">\color</span>{red} red <span class="j">赤</span> &amp; <span class="m">\color</span>{magenta} magenta <span class="u"><span class="j">マジェンタ</span></span> <span class="m">\\</span></div>
<div class="cl" style="top:585px">    <span class="m">\hline</span></div>
<div class="cl" style="top:600px">    <span class="m">\color</span>{green} green <span class="j">緑</span> &amp; <span class="m">\color</span>{cyan} cyan <span class="u"><span class="j">シアン</span></span> <span class="m">\\</span></div>
<div class="cl" style="top:615px">    <span class="m">\hline</span></div>
<div class="cl" style="top:630px">    <span class="m">\color</span>{yellow} yellow <span class="u"><span class="j">黄色</span></span> &amp; <span class="m">\color</span>{white} white <span class="u"><span class="j">白色</span></span><span class="m">\\</span></div>
<div class="cl" style="top:645px">    <span class="m">\hline</span></div>
<div class="cl" style="top:660px">  <span class="k">\end</span>{tabular}</div>
<div class="cl" style="top:675px"><span class="k">\end</span>{center}</div>
<div class="cl" style="top:690px"></div>

<!-- status -->
<div class="btn" style="left:3px;width:62px;background:linear-gradient(#8c9198,#a9aeb4);color:#f4f4f4">Structure</div>
<div class="btn" style="left:72px;width:63px">Messages / Log</div>
<div class="btn" style="left:142px;width:63px">Pdf Viewer</div>
<div class="btn" style="left:211px;width:64px">Source Viewer</div>
<div class="wt" style="left:281px;top:798px;font-size:11.5px">Ready</div>
<div class="wt" style="left:1133px;top:798px;font-size:11.5px">UTF-8<span style="font-size:11px;margin-left:14px">ノーマルモード</span></div>

</body></html>
